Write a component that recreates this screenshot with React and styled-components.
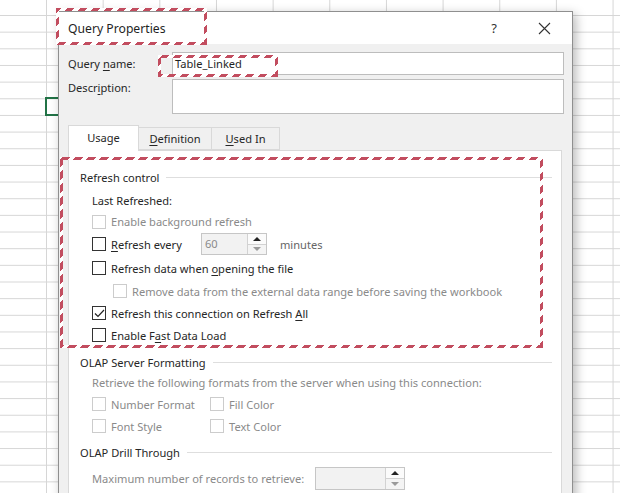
import React from "react";
import styled, { createGlobalStyle } from "styled-components";

const GlobalStyle = createGlobalStyle`
  html, body {
    margin: 0;
    padding: 0;
  }
  body {
    font-family: "Noto Sans", "Open Sans", sans-serif;
    overflow: hidden;
  }
`;

const Sheet = styled.div`
  position: relative;
  width: 620px;
  height: 493px;
  overflow: hidden;
  box-sizing: border-box;
  padding: 11px 0 0 58px;
  background-color: #fff;
  background-image: linear-gradient(to right, #d6d6d6 1px, transparent 1px),
    linear-gradient(to bottom, #d6d6d6 1px, transparent 1px);
  background-size: 56.67px 16.67px;
  background-position: 46px 15px;
`;

// selected cell of the worksheet, mostly hidden behind the dialog
const ActiveCell = styled.div`
  position: absolute;
  left: 45px;
  top: 97px;
  width: 20px;
  height: 15px;
  border: 2px solid #217346;
`;

const Dialog = styled.div`
  position: relative;
  z-index: 1;
  box-sizing: border-box;
  width: 515px;
  height: 520px;
  background: #f0f0f0;
  border: 1px solid #8f8f8f;
  box-shadow: 3px 3px 10px rgba(0, 0, 0, 0.28);
  color: #262626;
  font-size: 11.1px;
`;

const TitleBar = styled.div`
  position: relative;
  display: flex;
  align-items: center;
  height: 32px;
  padding-left: 9px;
  background: #fff;
`;

const Title = styled.span`
  flex: 1;
  font-size: 12.2px;
  color: #1f1f1f;
`;

const TitleButton = styled.div`
  display: flex;
  align-items: center;
  justify-content: center;
  width: ${({ w }) => w}px;
  height: 32px;
  margin-right: ${({ mr }) => mr || 0}px;
  font-size: 13px;
  color: #333;
`;

const Highlight = styled.div`
  position: absolute;
  left: ${({ x }) => x}px;
  top: ${({ y }) => y}px;
  width: ${({ w }) => w}px;
  height: ${({ h }) => h}px;
  box-sizing: border-box;
  border: 3px solid transparent;
  border-image: repeating-linear-gradient(
      -45deg,
      #c24d5f 0 5.5px,
      #ffffff 5.5px 9.2px
    )
    3;
  pointer-events: none;
`;

const Body = styled.div`
  padding: 8px 8px 0 9px;
`;

const FieldGrid = styled.div`
  display: grid;
  grid-template-columns: 104px 1fr;
  row-gap: 4px;
`;

const FieldLabel = styled.label`
  padding-top: ${({ pt }) => pt || 0}px;
  line-height: ${({ lh }) => lh || 21}px;
  color: #262626;
`;

const InputWrap = styled.div`
  position: relative;
`;

const TextBox = styled.div`
  box-sizing: border-box;
  height: ${({ h }) => h}px;
  padding: 0 2px;
  line-height: 21px;
  background: #fff;
  border: 1px solid #bdbdbd;
  color: #1f1f1f;
`;

const U = styled.span`
  text-decoration: underline;
  text-underline-offset: 2px;
`;

const Text = styled.span`
  white-space: nowrap;
`;

const TabStrip = styled.div`
  display: flex;
  align-items: flex-end;
  height: 25px;
  margin-top: 11px;
  position: relative;
  z-index: 1;
`;

const Tab = styled.div`
  box-sizing: border-box;
  display: flex;
  align-items: center;
  justify-content: center;
  width: ${({ w }) => w}px;
  height: ${({ active }) => (active ? 26 : 23)}px;
  margin-right: -1px;
  margin-bottom: ${({ active }) => (active ? -1 : 0)}px;
  padding-bottom: ${({ active }) => (active ? 2 : 1)}px;
  background: ${({ active }) => (active ? "#fff" : "#f0f0f0")};
  border: 1px solid #d9d9d9;
  border-bottom: ${({ active }) => (active ? "none" : "1px solid #d9d9d9")};
  color: #262626;
`;

const Panel = styled.div`
  box-sizing: border-box;
  height: 360px;
  margin-right: 2px;
  padding: 17px 9px 0 11px;
  background: #fff;
  border: 1px solid #d9d9d9;
`;

const Group = styled.div`
  position: relative;
  margin-top: ${({ mt }) => mt || 0}px;
`;

const GroupHeader = styled.div`
  display: flex;
  align-items: center;
  gap: 7px;
  height: 18px;
  color: #262626;

  &::after {
    content: "";
    flex: 1;
    height: 1px;
    background: #dedede;
  }
`;

const GroupBody = styled.div`
  padding-left: 12px;
  padding-top: ${({ pt }) => pt || 0}px;
`;

const Row = styled.div`
  display: flex;
  align-items: center;
  height: ${({ h }) => h || 22}px;
  padding-left: ${({ indent }) => indent || 0}px;
  white-space: nowrap;
  color: ${({ muted }) => (muted ? "#8a8a8a" : "#262626")};
`;

const Box = styled.span`
  box-sizing: border-box;
  display: inline-flex;
  align-items: center;
  justify-content: center;
  flex: none;
  width: 14px;
  height: 14px;
  margin-right: 5px;
  background: #fff;
  border: 1px solid ${({ disabled }) => (disabled ? "#cccccc" : "#333333")};
`;

const FixedLabel = styled.span`
  display: inline-block;
  width: ${({ w }) => w}px;
  flex: none;
  white-space: nowrap;
`;

const Spin = styled.div`
  box-sizing: border-box;
  display: flex;
  width: ${({ w }) => w}px;
  height: ${({ h }) => h}px;
  background: #f2f2f2;
  border: 1px solid #c6c6c6;
`;

const SpinValue = styled.span`
  flex: 1;
  padding-left: 3px;
  line-height: ${({ h }) => h - 2}px;
  color: #8a8a8a;
`;

const SpinButtons = styled.div`
  display: flex;
  flex-direction: column;
  width: 18px;
  border-left: 1px solid #d2d2d2;
`;

const SpinHalf = styled.div`
  flex: 1;
  display: flex;
  align-items: center;
  justify-content: center;
  background: ${({ up }) => (up ? "#fbfbfb" : "#f4f4f4")};
  border-bottom: ${({ up }) => (up ? "1px solid #d2d2d2" : "none")};
`;

const Arrow = styled.span`
  width: 0;
  height: 0;
  border-left: 4px solid transparent;
  border-right: 4px solid transparent;
  ${({ up }) =>
    up ? "border-bottom: 4px solid #222;" : "border-top: 4px solid #9a9a9a;"}
`;

const Suffix = styled.span`
  margin-left: 13px;
  color: #666;
`;

const FormatGrid = styled.div`
  display: grid;
  grid-template-columns: 118px auto;
`;

function Check({ checked, disabled, children, indent, h, muted }) {
  return (
    <Row indent={indent} h={h} muted={muted || disabled}>
      <Box disabled={disabled}>
        {checked && (
          <svg width="11" height="9" viewBox="0 0 11 9">
            <polyline
              points="1,4.5 4,7.5 10,1"
              fill="none"
              stroke="#222"
              strokeWidth="1.2"
            />
          </svg>
        )}
      </Box>
      {children}
    </Row>
  );
}

function SpinBox({ w, h, value }) {
  return (
    <Spin w={w} h={h}>
      <SpinValue h={h}>{value}</SpinValue>
      <SpinButtons>
        <SpinHalf up>
          <Arrow up />
        </SpinHalf>
        <SpinHalf>
          <Arrow />
        </SpinHalf>
      </SpinButtons>
    </Spin>
  );
}

export default function App() {
  return (
    <Sheet>
      <GlobalStyle />
      <ActiveCell />
      <Dialog>
        <TitleBar>
          <Title>Query Properties</Title>
          <TitleButton w={30} mr={15}>?</TitleButton>
          <TitleButton w={40} mr={8}>
            <svg width="13" height="13" viewBox="0 0 13 13">
              <path d="M1 1 L12 12 M12 1 L1 12" stroke="#333" strokeWidth="1.1" />
            </svg>
          </TitleButton>
          <Highlight x={-3} y={-4} w={151} h={37} />
        </TitleBar>

        <Body>
          <FieldGrid>
            <FieldLabel pt={1}>
              Query <U>n</U>ame:
            </FieldLabel>
            <InputWrap>
              <TextBox h={23}>Table_Linked</TextBox>
              <Highlight x={-14} y={3} w={120} h={22} />
            </InputWrap>
            <FieldLabel lh={17}>
              Descr<U>i</U>ption:
            </FieldLabel>
            <TextBox h={35} />
          </FieldGrid>

          <TabStrip>
            <Tab w={71} active>
              Usage
            </Tab>
            <Tab w={74}>
              <Text>
                <U>D</U>efinition
              </Text>
            </Tab>
            <Tab w={69}>
              <Text>
                <U>U</U>sed In
              </Text>
            </Tab>
          </TabStrip>

          <Panel>
            <Group>
              <GroupHeader>Refresh control</GroupHeader>
              <GroupBody pt={4}>
                <Row h={21}>Last Refreshed:</Row>
                <Check disabled h={21}>
                  <Text>Enable background refresh</Text>
                </Check>
                <Check h={24}>
                  <FixedLabel w={90}>
                    <U>R</U>efresh every
                  </FixedLabel>
                  <SpinBox w={66} h={22} value="60" />
                  <Suffix>minutes</Suffix>
                </Check>
                <Check h={24}>
                  <Text>
                    Refresh data when <U>o</U>pening the file
                  </Text>
                </Check>
                <Check disabled indent={21}>
                  <Text>
                    Remove data from the external data range before saving the
                    workbook
                  </Text>
                </Check>
                <Check checked>
                  <Text>
                    Refresh this connection on Refresh <U>A</U>ll
                  </Text>
                </Check>
                <Check>
                  <Text>
                    Enable F<U>a</U>st Data Load
                  </Text>
                </Check>
              </GroupBody>
              <Highlight x={-20} y={-11} w={483} h={191} />
            </Group>

            <Group mt={7}>
              <GroupHeader>OLAP Server Formatting</GroupHeader>
              <GroupBody>
                <Row muted>
                  <Text>
                    Retrieve the following formats from the server when using
                    this connection:
                  </Text>
                </Row>
                <FormatGrid>
                  <Check disabled>
                    <Text>Number Format</Text>
                  </Check>
                  <Check disabled>
                    <Text>Fill Color</Text>
                  </Check>
                  <Check disabled>
                    <Text>Font Style</Text>
                  </Check>
                  <Check disabled>
                    <Text>Text Color</Text>
                  </Check>
                </FormatGrid>
              </GroupBody>
            </Group>

            <Group mt={6}>
              <GroupHeader>OLAP Drill Through</GroupHeader>
              <GroupBody>
                <Row h={34} muted>
                  <FixedLabel w={223}>
                    Maximum number of records to retrieve:
                  </FixedLabel>
                  <SpinBox w={90} h={23} value="" />
                </Row>
              </GroupBody>
            </Group>
          </Panel>
        </Body>
      </Dialog>
    </Sheet>
  );
}
